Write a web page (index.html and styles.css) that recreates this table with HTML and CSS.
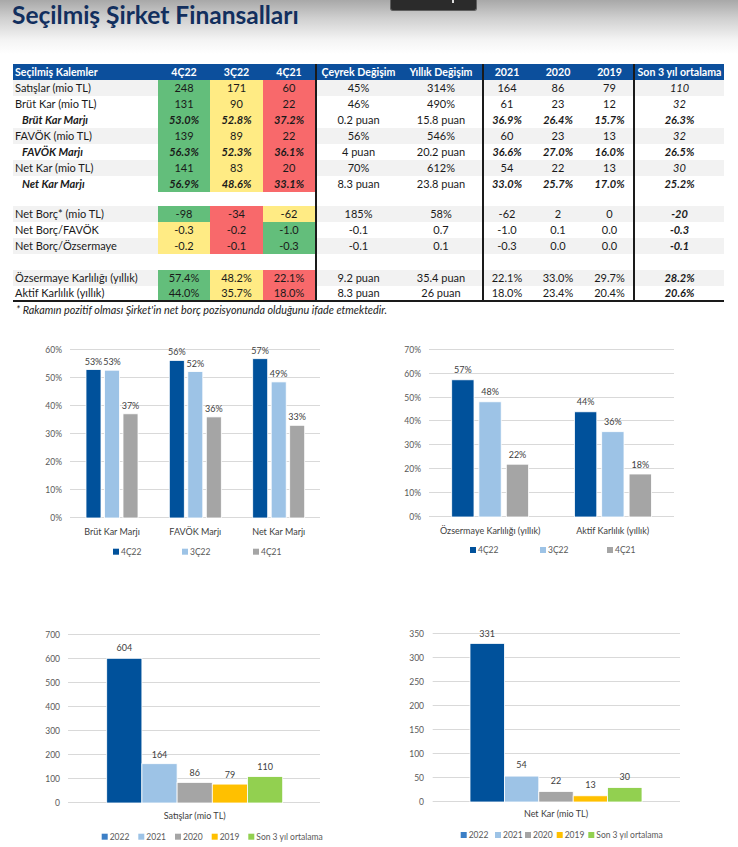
FILE: index.html
```html
<!DOCTYPE html>
<html lang="tr">
<head>
<meta charset="utf-8">
<title>Seçilmiş Şirket Finansalları</title>
<link rel="stylesheet" href="styles.css">
</head>
<body>
<header class="top">
  <h1 class="title">Seçilmiş Şirket Finansalları</h1>
  <div class="tab"></div>
</header>

<section class="fin">
  <div class="row head"><div>Seçilmiş Kalemler</div><div>4Ç22</div><div>3Ç22</div><div>4Ç21</div><div>Çeyrek Değişim</div><div>Yıllık Değişim</div><div>2021</div><div>2020</div><div>2019</div><div>Son 3 yıl ortalama</div></div>
  <div class="row alt"><div>Satışlar (mio TL)</div><div class="g">248</div><div class="y">171</div><div class="r">60</div><div>45%</div><div>314%</div><div>164</div><div>86</div><div>79</div><div class="it">110</div></div>
  <div class="row"><div>Brüt Kar (mio TL)</div><div class="g">131</div><div class="y">90</div><div class="r">22</div><div>46%</div><div>490%</div><div>61</div><div>23</div><div>12</div><div class="it">32</div></div>
  <div class="row"><div class="bi ind">Brüt Kar Marjı</div><div class="g bi">53.0%</div><div class="y bi">52.8%</div><div class="r bi">37.2%</div><div>0.2 puan</div><div>15.8 puan</div><div class="bi">36.9%</div><div class="bi">26.4%</div><div class="bi">15.7%</div><div class="bi">26.3%</div></div>
  <div class="row alt"><div>FAVÖK (mio TL)</div><div class="g">139</div><div class="y">89</div><div class="r">22</div><div>56%</div><div>546%</div><div>60</div><div>23</div><div>13</div><div class="it">32</div></div>
  <div class="row"><div class="bi ind">FAVÖK Marjı</div><div class="g bi">56.3%</div><div class="y bi">52.3%</div><div class="r bi">36.1%</div><div>4 puan</div><div>20.2 puan</div><div class="bi">36.6%</div><div class="bi">27.0%</div><div class="bi">16.0%</div><div class="bi">26.5%</div></div>
  <div class="row alt"><div>Net Kar (mio TL)</div><div class="g">141</div><div class="y">83</div><div class="r">20</div><div>70%</div><div>612%</div><div>54</div><div>22</div><div>13</div><div class="it">30</div></div>
  <div class="row"><div class="bi ind">Net Kar Marjı</div><div class="g bi">56.9%</div><div class="y bi">48.6%</div><div class="r bi">33.1%</div><div>8.3 puan</div><div>23.8 puan</div><div class="bi">33.0%</div><div class="bi">25.7%</div><div class="bi">17.0%</div><div class="bi">25.2%</div></div>
  <div class="row gap"><div></div><div></div><div></div><div></div><div></div><div></div><div></div><div></div><div></div><div></div></div>
  <div class="row alt"><div>Net Borç* (mio TL)</div><div class="g">-98</div><div class="r">-34</div><div class="y">-62</div><div>185%</div><div>58%</div><div>-62</div><div>2</div><div>0</div><div class="bi">-20</div></div>
  <div class="row"><div>Net Borç/FAVÖK</div><div class="y">-0.3</div><div class="r">-0.2</div><div class="g">-1.0</div><div>-0.1</div><div>0.7</div><div>-1.0</div><div>0.1</div><div>0.0</div><div class="bi">-0.3</div></div>
  <div class="row alt"><div>Net Borç/Özsermaye</div><div class="y">-0.2</div><div class="r">-0.1</div><div class="g">-0.3</div><div>-0.1</div><div>0.1</div><div>-0.3</div><div>0.0</div><div>0.0</div><div class="bi">-0.1</div></div>
  <div class="row gap2"><div></div><div></div><div></div><div></div><div></div><div></div><div></div><div></div><div></div><div></div></div>
  <div class="row alt"><div>Özsermaye Karlılığı (yıllık)</div><div class="g">57.4%</div><div class="y">48.2%</div><div class="r">22.1%</div><div>9.2 puan</div><div>35.4 puan</div><div>22.1%</div><div>33.0%</div><div>29.7%</div><div class="bi">28.2%</div></div>
  <div class="row last"><div>Aktif Karlılık (yıllık)</div><div class="g">44.0%</div><div class="y">35.7%</div><div class="r">18.0%</div><div>8.3 puan</div><div>26 puan</div><div>18.0%</div><div>23.4%</div><div>20.4%</div><div class="bi">20.6%</div></div>
</section>
<p class="note">* Rakamın pozitif olması Şirket'in net borç pozisyonunda olduğunu ifade etmektedir.</p>

<section class="charts">
  <!-- Chart 1 -->
  <svg class="chart" width="369" height="260" viewBox="0 330 369 260">
    <g class="grid">
      <line x1="70" x2="320" y1="517.5" y2="517.5"/><line x1="70" x2="320" y1="489.5" y2="489.5"/><line x1="70" x2="320" y1="461.5" y2="461.5"/><line x1="70" x2="320" y1="433.5" y2="433.5"/><line x1="70" x2="320" y1="405.5" y2="405.5"/><line x1="70" x2="320" y1="377.5" y2="377.5"/><line x1="70" x2="320" y1="349.5" y2="349.5"/>
    </g>
    <g class="ax">
      <text x="62" y="520.5">0%</text><text x="62" y="492.5">10%</text><text x="62" y="464.5">20%</text><text x="62" y="436.5">30%</text><text x="62" y="408.5">40%</text><text x="62" y="380.5">50%</text><text x="62" y="352.5">60%</text>
    </g>
    <g class="bars">
      <rect class="b1" x="86" y="369.6" width="15" height="148.4"/><rect class="b2" x="104.5" y="370.2" width="15" height="147.8"/><rect class="b3" x="123" y="413.8" width="15" height="104.2"/>
      <rect class="b1" x="169.3" y="360.4" width="15" height="157.6"/><rect class="b2" x="187.8" y="371.6" width="15" height="146.4"/><rect class="b3" x="206.3" y="416.9" width="15" height="101.1"/>
      <rect class="b1" x="252.7" y="358.7" width="15" height="159.3"/><rect class="b2" x="271.2" y="381.9" width="15" height="136.1"/><rect class="b3" x="289.7" y="425.3" width="15" height="92.7"/>
    </g>
    <g class="dl">
      <text x="93.5" y="364.6">53%</text><text x="112" y="365.2">53%</text><text x="130.5" y="408.8">37%</text>
      <text x="176.8" y="355.4">56%</text><text x="195.3" y="366.6">52%</text><text x="213.8" y="411.9">36%</text>
      <text x="260.2" y="353.7">57%</text><text x="278.7" y="376.9">49%</text><text x="297.2" y="420.3">33%</text>
    </g>
    <g class="cat">
      <text x="112" y="534.5">Brüt Kar Marjı</text><text x="195.3" y="534.5">FAVÖK Marjı</text><text x="278.7" y="534.5">Net Kar Marjı</text>
    </g>
    <g class="lg">
      <rect class="b1" x="113" y="548.7" width="6" height="6"/><text x="121" y="554.7">4Ç22</text>
      <rect class="b2" x="182" y="548.7" width="6" height="6"/><text x="190" y="554.7">3Ç22</text>
      <rect class="b3" x="253" y="548.7" width="6" height="6"/><text x="261" y="554.7">4Ç21</text>
    </g>
  </svg>

  <!-- Chart 2 -->
  <svg class="chart" width="369" height="260" viewBox="369 330 369 260">
    <g class="grid">
      <line x1="429" x2="674" y1="516.5" y2="516.5"/><line x1="429" x2="674" y1="492.5" y2="492.5"/><line x1="429" x2="674" y1="468.5" y2="468.5"/><line x1="429" x2="674" y1="444.5" y2="444.5"/><line x1="429" x2="674" y1="420.5" y2="420.5"/><line x1="429" x2="674" y1="397.5" y2="397.5"/><line x1="429" x2="674" y1="373.5" y2="373.5"/><line x1="429" x2="674" y1="349.5" y2="349.5"/>
    </g>
    <g class="ax">
      <text x="421" y="519.5">0%</text><text x="421" y="495.5">10%</text><text x="421" y="471.5">20%</text><text x="421" y="447.5">30%</text><text x="421" y="423.5">40%</text><text x="421" y="400.5">50%</text><text x="421" y="376.5">60%</text><text x="421" y="352.5">70%</text>
    </g>
    <g class="bars">
      <rect class="b1" x="451.7" y="379.8" width="22.3" height="137.2"/><rect class="b2" x="478.9" y="401.8" width="22.3" height="115.2"/><rect class="b3" x="506.3" y="464.2" width="22.3" height="52.8"/>
      <rect class="b1" x="574.5" y="411.8" width="22.3" height="105.2"/><rect class="b2" x="601.7" y="431.7" width="22.3" height="85.3"/><rect class="b3" x="629.1" y="474" width="22.3" height="43"/>
    </g>
    <g class="dl">
      <text x="462.9" y="373.3">57%</text><text x="490.1" y="395.3">48%</text><text x="517.5" y="457.7">22%</text>
      <text x="585.7" y="405.3">44%</text><text x="612.9" y="425.2">36%</text><text x="640.3" y="467.5">18%</text>
    </g>
    <g class="cat">
      <text x="490.2" y="533.5">Özsermaye Karlılığı (yıllık)</text><text x="612.7" y="533.5">Aktif Karlılık (yıllık)</text>
    </g>
    <g class="lg">
      <rect class="b1" x="470" y="547" width="6" height="6"/><text x="478" y="553">4Ç22</text>
      <rect class="b2" x="540" y="547" width="6" height="6"/><text x="548" y="553">3Ç22</text>
      <rect class="b3" x="607" y="547" width="6" height="6"/><text x="615" y="553">4Ç21</text>
    </g>
  </svg>

  <!-- Chart 3 -->
  <svg class="chart" width="369" height="257" viewBox="0 590 369 257">
    <g class="grid">
      <line x1="68" x2="320" y1="802.5" y2="802.5"/><line x1="68" x2="320" y1="778.5" y2="778.5"/><line x1="68" x2="320" y1="754.5" y2="754.5"/><line x1="68" x2="320" y1="730.5" y2="730.5"/><line x1="68" x2="320" y1="706.5" y2="706.5"/><line x1="68" x2="320" y1="682.5" y2="682.5"/><line x1="68" x2="320" y1="658.5" y2="658.5"/><line x1="68" x2="320" y1="634.5" y2="634.5"/>
    </g>
    <g class="ax">
      <text x="60" y="805.5">0</text><text x="60" y="781.5">100</text><text x="60" y="757.5">200</text><text x="60" y="733.5">300</text><text x="60" y="709.5">400</text><text x="60" y="685.5">500</text><text x="60" y="661.5">600</text><text x="60" y="637.5">700</text>
    </g>
    <g class="bars">
      <rect class="b1" x="106.7" y="658.3" width="35.2" height="144.7"/>
      <rect class="b2" x="141.9" y="763.7" width="35.2" height="39.3"/>
      <rect class="b3" x="177.1" y="782.4" width="35.2" height="20.6"/>
      <rect class="b4" x="212.3" y="784.1" width="35.2" height="18.9"/>
      <rect class="b5" x="247.5" y="776.6" width="35.2" height="26.4"/>
    </g>
    <g class="dl">
      <text x="124.3" y="651">604</text><text x="159.5" y="758">164</text><text x="194.7" y="776">86</text><text x="229.9" y="777.5">79</text><text x="265.1" y="770">110</text>
    </g>
    <g class="cat">
      <text x="194.7" y="819">Satışlar (mio TL)</text>
    </g>
    <g class="lg">
      <rect class="l1" x="101.7" y="833.7" width="6" height="6"/><text x="109.7" y="839.7">2022</text>
      <rect class="b2" x="138.3" y="833.7" width="6" height="6"/><text x="146.3" y="839.7">2021</text>
      <rect class="b3" x="175" y="833.7" width="6" height="6"/><text x="183" y="839.7">2020</text>
      <rect class="b4" x="211.7" y="833.7" width="6" height="6"/><text x="219.7" y="839.7">2019</text>
      <rect class="b5" x="248.3" y="833.7" width="6" height="6"/><text x="256.3" y="839.7">Son 3 yıl ortalama</text>
    </g>
  </svg>

  <!-- Chart 4 -->
  <svg class="chart" width="369" height="257" viewBox="369 590 369 257">
    <g class="grid">
      <line x1="432.7" x2="680" y1="801.5" y2="801.5"/><line x1="432.7" x2="680" y1="777.5" y2="777.5"/><line x1="432.7" x2="680" y1="753.5" y2="753.5"/><line x1="432.7" x2="680" y1="729.5" y2="729.5"/><line x1="432.7" x2="680" y1="705.5" y2="705.5"/><line x1="432.7" x2="680" y1="681.5" y2="681.5"/><line x1="432.7" x2="680" y1="657.5" y2="657.5"/><line x1="432.7" x2="680" y1="633.5" y2="633.5"/>
    </g>
    <g class="ax">
      <text x="424" y="804.5">0</text><text x="424" y="780.5">50</text><text x="424" y="756.5">100</text><text x="424" y="732.5">150</text><text x="424" y="708.5">200</text><text x="424" y="684.5">250</text><text x="424" y="660.5">300</text><text x="424" y="636.5">350</text>
    </g>
    <g class="bars">
      <rect class="b1" x="470" y="643.4" width="34.4" height="158.6"/>
      <rect class="b2" x="504.4" y="776.1" width="34.4" height="25.9"/>
      <rect class="b3" x="538.8" y="791.5" width="34.4" height="10.5"/>
      <rect class="b4" x="573.2" y="795.8" width="34.4" height="6.2"/>
      <rect class="b5" x="607.6" y="787.6" width="34.4" height="14.4"/>
    </g>
    <g class="dl">
      <text x="487.2" y="636.5">331</text><text x="521.6" y="768">54</text><text x="556" y="784">22</text><text x="590.4" y="787.5">13</text><text x="624.8" y="780">30</text>
    </g>
    <g class="cat">
      <text x="556" y="816.5">Net Kar (mio TL)</text>
    </g>
    <g class="lg">
      <rect class="l1" x="460.7" y="832" width="6" height="6"/><text x="468.7" y="838">2022</text>
      <rect class="b2" x="495" y="832" width="6" height="6"/><text x="503" y="838">2021</text>
      <rect class="b3" x="525" y="832" width="6" height="6"/><text x="533" y="838">2020</text>
      <rect class="b4" x="556.7" y="832" width="6" height="6"/><text x="564.7" y="838">2019</text>
      <rect class="b5" x="588.3" y="832" width="6" height="6"/><text x="596.3" y="838">Son 3 yıl ortalama</text>
    </g>
  </svg>
</section>
</body>
</html>
```

FILE: styles.css
```css
* {
  box-sizing: border-box;
  margin: 0;
  padding: 0;
}

html,
body {
  width: 738px;
  height: 847px;
  overflow: hidden;
  background: #ffffff;
}

body {
  font-family: Lato, "Liberation Sans", sans-serif;
  color: #1a1a1a;
}

/* ---------- header ---------- */
.top {
  position: relative;
  height: 64px;
  padding: 0 0 0 12px;
  background: linear-gradient(to bottom, #a8a8a8 0px, #cfcfcf 18px, #f4f4f4 40px, #ffffff 54px);
}

.title {
  font-size: 24.5px;
  font-weight: 700;
  line-height: 30px;
  color: #122f5e;
}

.tab {
  position: absolute;
  left: 390px;
  top: 0;
  width: 87px;
  height: 11px;
  background: #2b2b2b;
  border: 1px solid #5f5f5f;
  border-top: none;
  border-radius: 0 0 3px 3px;
}

.tab::after {
  content: "";
  position: absolute;
  left: 61px;
  top: 0;
  width: 2px;
  height: 3px;
  background: #dddddd;
}

/* ---------- table ---------- */
.fin {
  margin-left: 13px;
  width: 711px;
  border-bottom: 2px solid #1a1a1a;
  font-size: 11px;
}

.row {
  display: grid;
  grid-template-columns: 145px 52px 53px 52px 85px 82px 48px 56px 47px 91px;
  height: 16px;
  line-height: 16px;
}

.row > div {
  text-align: center;
  white-space: nowrap;
  overflow: hidden;
}

.row > div:first-child {
  text-align: left;
  padding-left: 2px;
}

.row > div:nth-child(5),
.row > div:nth-child(7),
.row > div:nth-child(10) {
  border-left: 2px solid #1a1a1a;
}

.head {
  background: #0c4f9c;
  color: #ffffff;
  font-weight: 700;
  font-size: 10.6px;
}

.alt {
  background: #f2f2f2;
}

.gap {
  height: 14px;
}

.gap2 {
  height: 16px;
}

.last {
  height: 14px;
  line-height: 14px;
}

.g { background: #63be7b; }
.y { background: #ffeb84; }
.r { background: #f8696b; }

.bi {
  font-weight: 700;
  font-style: italic;
}

.it {
  font-style: italic;
}

.row > div.ind {
  padding-left: 9px;
}

.note {
  height: 28px;
  padding-left: 16px;
  font-size: 10.8px;
  font-style: italic;
  line-height: 16px;
  color: #222222;
}

/* ---------- charts ---------- */
.charts {
  display: grid;
  grid-template-columns: 369px 369px;
  grid-template-rows: 260px 257px;
}

.chart {
  display: block;
}

.chart text {
  font-family: Lato, "Liberation Sans", sans-serif;
}

.grid line {
  stroke: #d9d9d9;
  stroke-width: 1;
}

.ax text {
  font-size: 8.5px;
  fill: #595959;
  text-anchor: end;
}

.dl text {
  font-size: 9px;
  fill: #404040;
  text-anchor: middle;
}

.cat text {
  font-size: 9px;
  fill: #404040;
  text-anchor: middle;
}

.lg text {
  font-size: 8.5px;
  fill: #595959;
}

.bars rect {
  stroke: #ffffff;
  stroke-width: 0.8;
}

.b1 { fill: #00519b; }
.b2 { fill: #9dc3e6; }
.b3 { fill: #a5a5a5; }
.b4 { fill: #ffc000; }
.b5 { fill: #92d050; }
.l1 { fill: #3c7fc6; }
```
